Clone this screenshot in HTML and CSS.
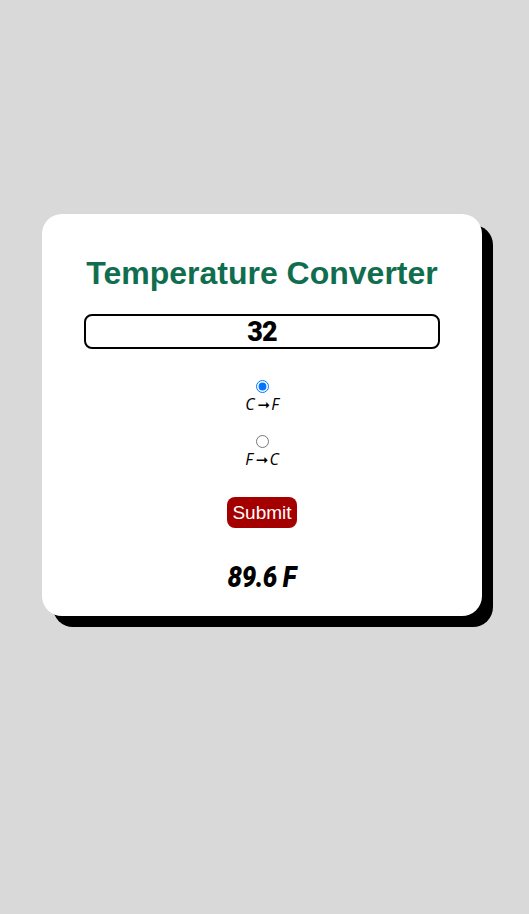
FILE: index.html
```html
<!DOCTYPE html>
<html>
<head>
<meta charset="utf-8">
<link rel="stylesheet" href="styles.css">
</head>
<body>
<div class="card">
  <h1 class="title">Temperature Converter</h1>
  <input class="num" type="text" value="32">
  <div class="option">
    <input type="radio" name="dir" id="cf" checked>
    <label for="cf">C<span class="arrow">➞</span>F</label>
  </div>
  <div class="option">
    <input type="radio" name="dir" id="fc">
    <label for="fc">F<span class="arrow">➞</span>C</label>
  </div>
  <button class="submit">Submit</button>
  <div class="result"><span class="result-text">89.6 F</span></div>
</div>
</body>
</html>
```
FILE: styles.css
```css
html, body {
  margin: 0;
  padding: 0;
  background: #d9d9d9;
}
body {
  font-family: "Liberation Sans", Arial, sans-serif;
  padding-top: 214px;
  min-height: 914px;
  box-sizing: border-box;
}
.card {
  width: 440px;
  height: 402px;
  box-sizing: border-box;
  margin-left: 42px;
  background: #fff;
  border-radius: 20px;
  box-shadow: 11px 11px 0 #000;
  display: flex;
  flex-direction: column;
  align-items: center;
  padding-top: 41px;
}
.title {
  margin: 0;
  font-size: 32px;
  line-height: 37px;
  font-weight: bold;
  color: #106e4e;
}
.num {
  margin-top: 22px;
  width: 356px;
  height: 35px;
  box-sizing: border-box;
  border: 2px solid #000;
  border-radius: 8px;
  text-align: center;
  font-family: Roboto, "DejaVu Sans", sans-serif;
  font-weight: 900;
  font-size: 27px;
  letter-spacing: -1px;
  padding: 0;
  color: #000;
  background: #fff;
}
.option {
  display: flex;
  flex-direction: column;
  align-items: center;
}
.option:first-of-type {
  margin-top: 31px;
}
.option + .option {
  margin-top: 19px;
}
.option input {
  margin: 0 0 0 1px;
  width: 13px;
  height: 13px;
}
.option label {
  font-family: "Open Sans", "DejaVu Sans", sans-serif;
  font-style: italic;
  font-weight: 400;
  font-size: 16px;
  line-height: 22px;
  color: #000;
}
.arrow {
  font-family: "DejaVu Sans", sans-serif;
  font-style: normal;
  font-weight: bold;
  font-size: 15px;
  margin: 0 1px 0 3px;
}
.submit {
  margin-top: 26px;
  background: #a50000;
  color: #fff;
  border: none;
  border-radius: 8px;
  font-family: "Liberation Sans", Arial, sans-serif;
  font-size: 19px;
  height: 31px;
  padding: 0 5px;
}
.result {
  margin-top: 32px;
  line-height: 34px;
}
.result-text {
  display: inline-block;
  font-family: Roboto, "DejaVu Sans", sans-serif;
  font-weight: 900;
  font-style: italic;
  font-size: 30px;
  letter-spacing: -0.5px;
  transform: scaleX(0.86);
  color: #000;
}
```
